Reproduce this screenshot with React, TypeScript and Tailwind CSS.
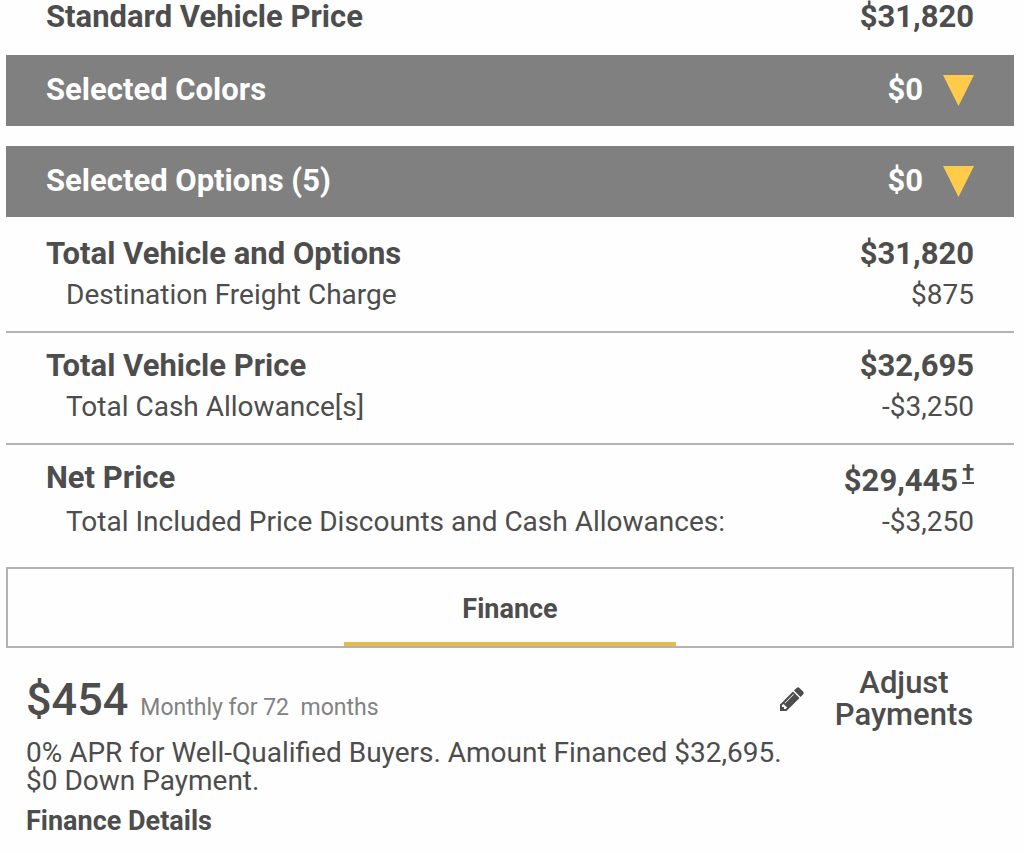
import React from "react";

type LineProps = { label: string; value: string };

function TotalLine({ label, value }: LineProps) {
  return (
    <div className="flex justify-between text-[31px] leading-10 font-bold">
      <dt>{label}</dt>
      <dd>{value}</dd>
    </div>
  );
}

function DetailLine({ label, value }: LineProps) {
  return (
    <div className="flex justify-between pl-5 text-[28px] leading-[42px]">
      <dt>{label}</dt>
      <dd>{value}</dd>
    </div>
  );
}

function ExpandBar({ label, value }: LineProps) {
  return (
    <button
      type="button"
      aria-expanded="false"
      className="flex h-[71px] w-full items-center justify-between bg-[#808080] px-10 text-[31px] leading-10 font-bold text-white"
    >
      <span className="pb-0.5">{label}</span>
      <span className="flex items-center gap-5">
        <span className="pb-0.5">{value}</span>
        <svg viewBox="0 0 31 31" className="size-[31px]" aria-hidden="true">
          <path d="M0 0h31L15.500 31z" fill="#ffcb4b" />
        </svg>
      </span>
    </button>
  );
}

function PencilIcon() {
  return (
    <svg viewBox="0 0 1792 1792" className="size-7 shrink-0" fill="currentColor" aria-hidden="true">
      <path d="M491 1536l91-91-235-235-91 91v107h128v128h107zm523-928q0-22-22-22-10 0-17 7l-542 542q-7 7-7 17 0 22 22 22 10 0 17-7l542-542q7-7 7-17zm-54-192l416 416-832 832h-416v-416zm683 96q0 53-37 90l-166 166-416-416 166-165q36-38 90-38 53 0 91 38l235 234q37 39 37 91z" />
    </svg>
  );
}

export default function App() {
  return (
    <main className="min-h-screen bg-[#fefefe] pr-2.5 pl-1.5 font-['Roboto',sans-serif] text-[#4d4d4d]">
      <dl className="flex justify-between px-10 pb-[21px] text-[31px] leading-[34px] font-bold">
        <dt>Standard Vehicle Price</dt>
        <dd>$31,820</dd>
      </dl>

      <div className="flex flex-col gap-5">
        <ExpandBar label="Selected Colors" value="$0" />
        <ExpandBar label="Selected Options (5)" value="$0" />
      </div>

      <dl className="px-10 pt-[17px] pb-[15px]">
        <TotalLine label="Total Vehicle and Options" value="$31,820" />
        <DetailLine label="Destination Freight Charge" value="$875" />
      </dl>
      <dl className="border-t-2 border-[#b3b3b3] px-10 pt-[13px] pb-[15px]">
        <TotalLine label="Total Vehicle Price" value="$32,695" />
        <DetailLine label="Total Cash Allowance[s]" value="-$3,250" />
      </dl>
      <dl className="border-t-2 border-[#b3b3b3] px-10 pt-[13px] pb-6">
        <div className="flex h-[43px] justify-between text-[31px] leading-10 font-bold">
          <dt>Net Price</dt>
          <dd className="flex self-end">
            $29,445
            <a href="#disclosure" className="ml-1 text-[22px] leading-6 underline">
              †
            </a>
          </dd>
        </div>
        <DetailLine label="Total Included Price Discounts and Cash Allowances:" value="-$3,250" />
      </dl>

      <div role="tablist" className="flex h-[81px] justify-center border-2 border-[#b3b3b3]">
        <button
          type="button"
          role="tab"
          aria-selected="true"
          className="w-[33%] border-b-4 border-[#e3bd48] pt-2 text-[27px] font-bold"
        >
          Finance
        </button>
      </div>

      <section className="pr-10 pl-5">
        <div className="flex items-start justify-between pt-[19px]">
          <p className="flex items-baseline gap-3 pt-1.5">
            <span className="text-[45px] leading-[54px] font-medium">$454</span>
            <span className="text-[23px] whitespace-pre text-[#828282]">Monthly for 72  months</span>
          </p>
          <button type="button" className="flex items-center gap-7">
            <PencilIcon />
            <span className="w-[140px] text-center text-[31px] leading-8 font-medium">
              Adjust Payments
            </span>
          </button>
        </div>
        <p className="pt-2 text-[28px] leading-7">
          0% APR for Well-Qualified Buyers. Amount Financed $32,695.
          <br />
          $0 Down Payment.
        </p>
        <a href="#finance-details" className="mt-2.5 inline-block text-[27px] leading-8 font-bold">
          Finance Details
        </a>
      </section>
    </main>
  );
}
